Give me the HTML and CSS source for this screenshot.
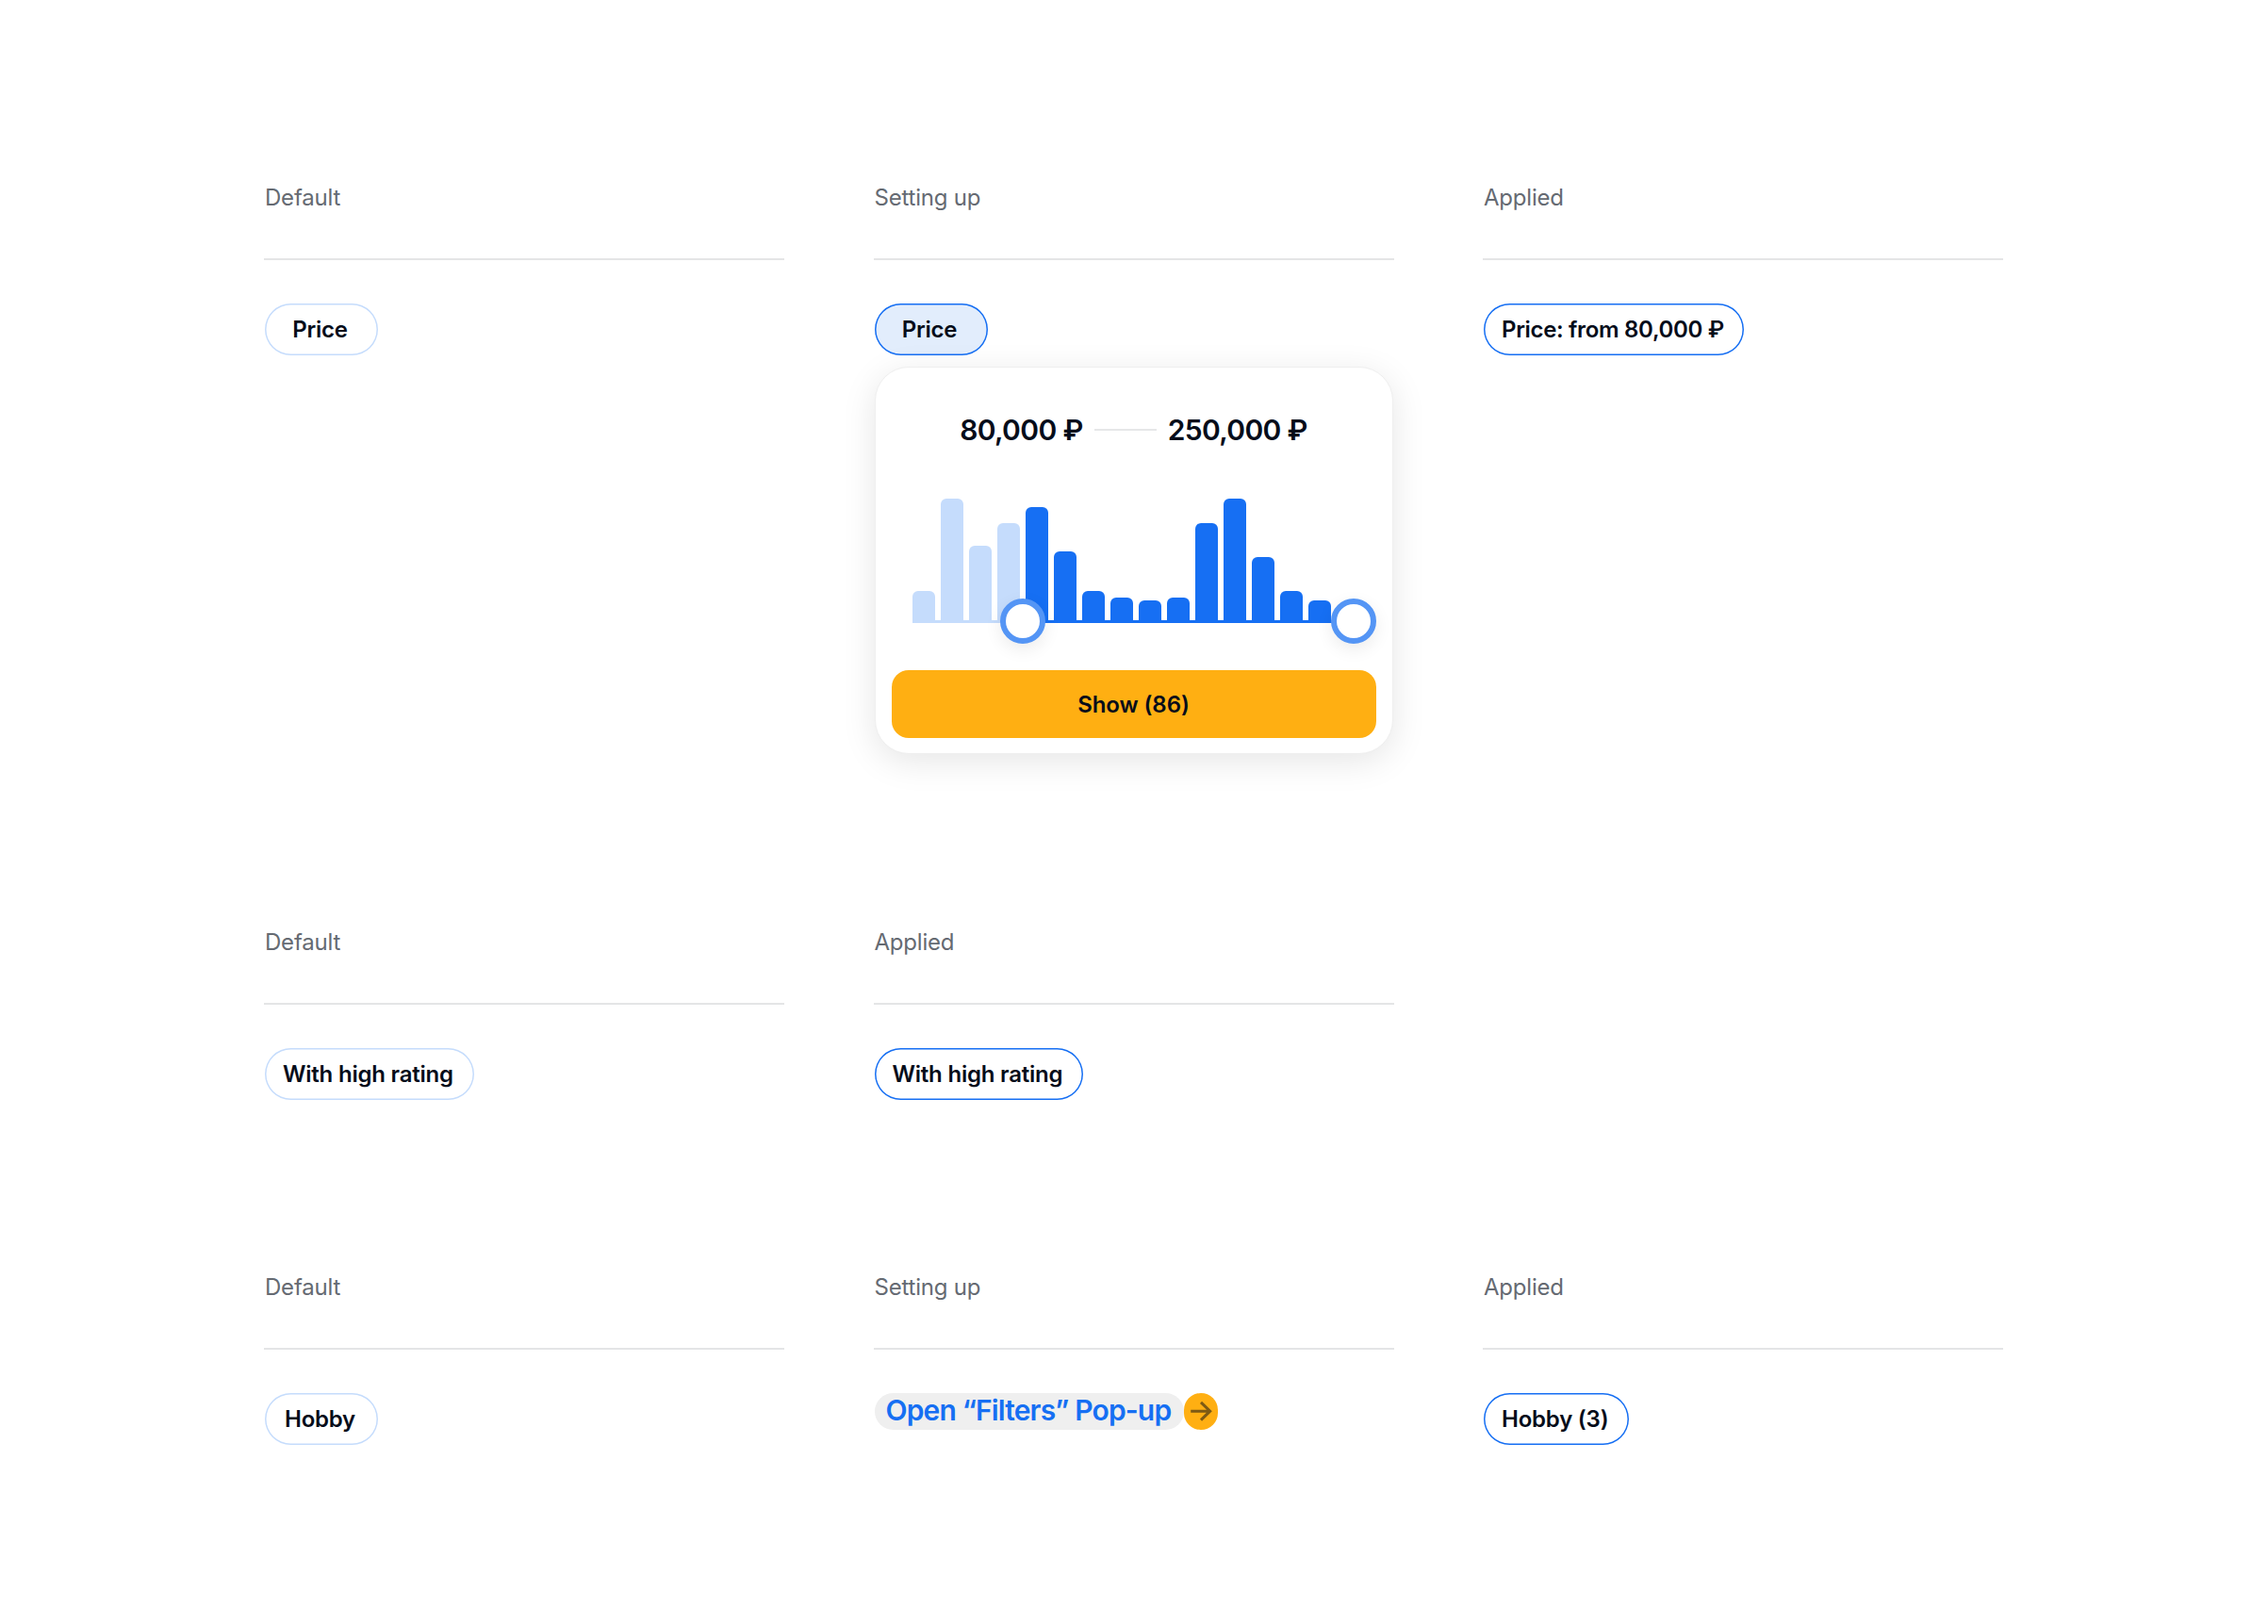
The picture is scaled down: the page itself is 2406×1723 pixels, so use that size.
FILE: index.html
```html
<!DOCTYPE html>
<html lang="en">
<head>
    <meta charset="UTF-8">
    <meta name="viewport" content="width=device-width, initial-scale=1.0">
    <title>Quick filters</title>
    <link rel="stylesheet" href="styles.css">
</head>
<body>

<main class="states">
    <section class="row row-price">
        <div class="state">
            <h2>Default</h2>
            <button type="button" class="chip">Price</button>
        </div>
        <div class="state">
            <h2>Setting up</h2>
            <button type="button" class="chip active">Price</button>
            <div class="popup">
                <div class="range">
                    <span>80,000 ₽</span>
                    <i class="dash"></i>
                    <span>250,000 ₽</span>
                </div>
                <div class="chart">
                    <div class="bars">
                        <div class="bar off" style="height: 34px"></div>
                        <div class="bar off" style="height: 132px"></div>
                        <div class="bar off" style="height: 82px"></div>
                        <div class="bar off" style="height: 106px"></div>
                        <div class="bar" style="height: 123px"></div>
                        <div class="bar" style="height: 76px"></div>
                        <div class="bar" style="height: 34px"></div>
                        <div class="bar" style="height: 27px"></div>
                        <div class="bar" style="height: 24px"></div>
                        <div class="bar" style="height: 27px"></div>
                        <div class="bar" style="height: 106px"></div>
                        <div class="bar" style="height: 132px"></div>
                        <div class="bar" style="height: 70px"></div>
                        <div class="bar" style="height: 34px"></div>
                        <div class="bar" style="height: 24px"></div>
                    </div>
                    <div class="track"></div>
                    <div class="handle" style="left: 25%"></div>
                    <div class="handle" style="left: 100%"></div>
                </div>
                <button type="button" class="show">Show (86)</button>
            </div>
        </div>
        <div class="state">
            <h2>Applied</h2>
            <button type="button" class="chip applied price">Price: from 80,000 ₽</button>
        </div>
    </section>

    <section class="row row-rating">
        <div class="state">
            <h2>Default</h2>
            <button type="button" class="chip">With high rating</button>
        </div>
        <div class="state">
            <h2>Applied</h2>
            <button type="button" class="chip applied">With high rating</button>
        </div>
    </section>

    <section class="row">
        <div class="state">
            <h2>Default</h2>
            <button type="button" class="chip">Hobby</button>
        </div>
        <div class="state">
            <h2>Setting up</h2>
            <a class="link" href="#">
                <span class="link-text">Open “Filters” Pop-up</span>
                <span class="link-icon">
                    <svg width="36" height="39" viewBox="0 0 36 39" fill="none" stroke="#7d5a14" stroke-width="3">
                        <path d="M7.2 19.2H28M18 9.8L27.7 19.2L18 28.6"/>
                    </svg>
                </span>
            </a>
        </div>
        <div class="state">
            <h2>Applied</h2>
            <button type="button" class="chip applied">Hobby (3)</button>
        </div>
    </section>
</main>

</body>
</html>
```

FILE: styles.css
```css
body {
    margin: 0;
    font-family: Inter, sans-serif;
    font-size: 24px;
    letter-spacing: -0.1px;
    color: #060d1a;
    background-color: #fff;
}

button {
    font: inherit;
    color: inherit;
    letter-spacing: inherit;
    box-sizing: border-box;
    border: none;
    cursor: pointer;
}

.states {
    padding: 190px 280px 0;
}

.row {
    display: grid;
    grid-template-columns: repeat(3, 552px);
    column-gap: 94.5px;
}

.row-price {
    height: 790px;
}

.row-rating {
    height: 366px;
}

.state {
    display: flex;
    flex-direction: column;
    align-items: flex-start;
}

h2 {
    align-self: stretch;
    box-sizing: border-box;
    height: 86px;
    margin: 0 0 46px;
    padding-left: 1px;
    border-bottom: 2px solid #e4e5e6;
    font-size: 24px;
    font-weight: 400;
    line-height: 39px;
    letter-spacing: -0.2px;
    color: #656a72;
}

.chip {
    min-width: 120px;
    height: 55px;
    margin-left: 1px;
    padding: 1px 22px 0 19px;
    border-radius: 28px;
    background-color: transparent;
    box-shadow: inset 0 0 0 1.5px #c5dcfc;
    font-weight: 600;
    line-height: 36px;
    letter-spacing: -0.22px;
}

.chip.applied {
    box-shadow: inset 0 0 0 1.5px #166ff3;
}

.chip.price {
    padding-right: 21px;
    letter-spacing: -0.33px;
}

.chip.active {
    background-color: #e2edfc;
    box-shadow: inset 0 0 0 1.5px #166ff3;
}

.popup {
    box-sizing: border-box;
    width: 550px;
    height: 411px;
    margin: 12px 0 0 1px;
    padding: 0 17px 16px;
    display: flex;
    flex-direction: column;
    border: 1px solid #efefef;
    border-radius: 36px;
    background-color: #fff;
    box-shadow: 0 8px 36px rgba(0, 0, 0, 0.1);
}

.range {
    display: flex;
    justify-content: center;
    align-items: center;
    gap: 12px;
    margin-top: 42px;
    font-size: 30px;
    font-weight: 600;
    line-height: 48px;
    letter-spacing: -0.65px;
}

.dash {
    width: 66px;
    height: 2px;
    background-color: #e6e7e8;
}

.chart {
    position: relative;
    width: 468px;
    height: 132px;
    margin: 49px 0 0 22px;
}

.bars {
    display: flex;
    align-items: flex-end;
    gap: 6px;
    height: 132px;
}

.bar {
    width: 24px;
    border-radius: 6px 6px 0 0;
    background-color: #166ff3;
}

.bar.off {
    background-color: #c5dcfc;
}

/* thin line under the bars, lighter up to the left handle */
.track {
    position: absolute;
    left: 0;
    right: 0;
    bottom: 0;
    height: 3px;
    background: linear-gradient(to right, #c5dcfc 25%, #166ff3 25%);
}

.handle {
    position: absolute;
    bottom: -21.5px;
    box-sizing: border-box;
    width: 48px;
    height: 48px;
    margin-left: -24px;
    border: 6px solid #5495f5;
    border-radius: 50%;
    background-color: #fff;
    box-shadow: 0 6px 18px rgba(0, 0, 0, 0.08);
}

.show {
    height: 72px;
    margin-top: auto;
    border-radius: 18px;
    background-color: #ffaf12;
    font-weight: 600;
}

.link {
    display: flex;
    margin-left: 1px;
    text-decoration: none;
}

.link-text {
    height: 39px;
    padding: 0 14px 0 12px;
    border-radius: 20px;
    background-color: #efefef;
    color: #166ff3;
    font-size: 30px;
    font-weight: 600;
    line-height: 36px;
    letter-spacing: -0.85px;
}

.link-icon {
    display: flex;
    width: 36px;
    height: 39px;
    border-radius: 18px;
    background-color: #ffaf12;
}
```
